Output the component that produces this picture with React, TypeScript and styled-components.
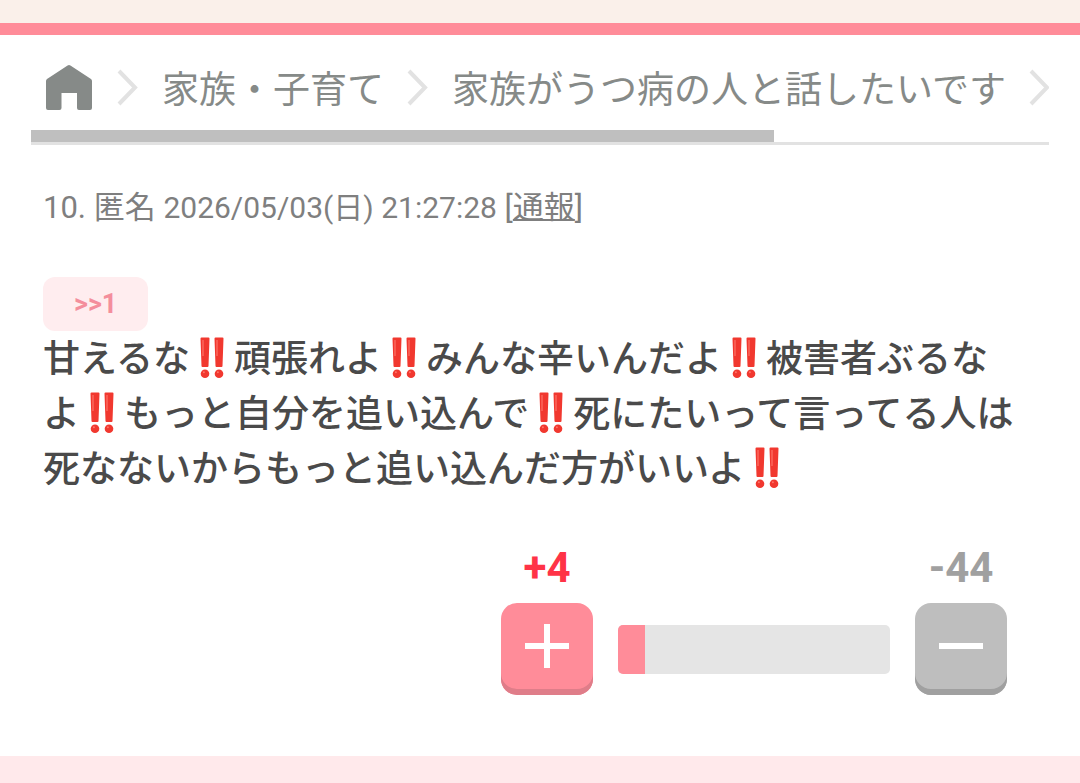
import React from "react";
import styled, { createGlobalStyle } from "styled-components";

const GlobalStyle = createGlobalStyle`
  * { box-sizing: border-box; }
  body {
    margin: 0;
    background: #fff;
    font-family: Roboto, "Noto Sans CJK JP", sans-serif;
  }
`;

const Page = styled.div`
  display: flex;
  flex-direction: column;
  min-height: 100vh;
`;

const TopStrip = styled.header`
  height: 35px;
  background: #faf0ea;
  border-bottom: 12px solid #ff8c99;
`;

const BreadcrumbNav = styled.nav`
  margin: 0 31px;
  border-bottom: 3px solid #e2e2e2;
`;

const CrumbList = styled.ol`
  display: flex;
  align-items: center;
  gap: 23px;
  height: 95px;
  margin: 0;
  padding: 10px 0 0 15px;
  list-style: none;
  overflow: hidden;
  white-space: nowrap;
`;

const Crumb = styled.li`
  display: flex;
  align-items: center;
  gap: 23px;
  flex-shrink: 0;
`;

const CrumbLink = styled.a`
  display: block;
  color: #868a88;
  font-family: "Noto Sans CJK JP", sans-serif;
  font-size: 37px;
  line-height: 55px;
  text-decoration: none;

  svg { display: block; }
`;

const ScrollThumb = styled.div`
  width: 73%;
  height: 12px;
  background: #bfbfbf;
`;

const Comment = styled.article`
  padding: 43px 43px 61px;
`;

const Meta = styled.p`
  margin: 0 0 49px;
  color: #7f7f7f;
  font-size: 31px;
  line-height: 40px;
`;

const PostTime = styled.time`
  font-size: 30px;
`;

const ReportLink = styled.a`
  color: inherit;
  text-decoration: underline;
  text-decoration-thickness: 2px;
`;

const ReplyLink = styled.a`
  display: block;
  width: fit-content;
  padding: 0 31px;
  border-radius: 12px;
  background: #ffedef;
  color: #f48e9c;
  font-size: 27px;
  font-weight: 700;
  line-height: 54px;
  text-decoration: none;
`;

const Body = styled.p`
  margin: 1px 0 0;
  padding-right: 15px;
  color: #4a4a4a;
  font-size: 37px;
  font-weight: 500;
  line-height: 55px;
`;

const EmojiMark = styled.svg`
  width: 44px;
  height: 42px;
  vertical-align: -7px;
`;

const VoteRow = styled.div`
  display: flex;
  justify-content: flex-end;
  align-items: flex-end;
  gap: 25px;
  margin-top: 47px;
  padding-right: 30px;
`;

const VoteColumn = styled.div`
  display: flex;
  flex-direction: column;
  align-items: center;
  gap: 11px;
  width: 92px;
`;

const VoteCount = styled.span<{ $color: string }>`
  color: ${(p) => p.$color};
  font-size: 42px;
  font-weight: 700;
  line-height: 48px;
`;

const VoteButton = styled.button<{ $face: string; $edge: string }>`
  display: flex;
  justify-content: center;
  width: 92px;
  height: 92px;
  padding: 21px 0 0;
  border: 0;
  border-radius: 16px;
  background: ${(p) => p.$face};
  box-shadow: inset 0 -6px 0 ${(p) => p.$edge};
  cursor: pointer;
`;

const VoteBar = styled.div`
  width: 272px;
  height: 49px;
  margin-bottom: 21px;
  border-radius: 5px;
  background: #e5e5e5;
  overflow: hidden;
`;

const VoteFill = styled.div`
  width: 10%;
  height: 100%;
  background: #ff8c99;
`;

const BottomStrip = styled.footer`
  flex: 1;
  min-height: 27px;
  background: #ffe9eb;
`;

const HomeIcon = () => (
  <svg width="48" height="45" viewBox="0 0 48 45" aria-hidden="true">
    <path
      fill="#868a88"
      d="M21.6 .5Q23-.4 24.4 .5L45 14Q46 14.8 46 16V43Q46 45 44 45H33Q31 45 31 43V28H15.500V43Q15.500 45 13.500 45H2Q0 45 0 43V16Q0 14.800 1 14Z"
    />
  </svg>
);

const Chevron = () => (
  <svg width="22" height="37" viewBox="0 0 22 37" aria-hidden="true">
    <path d="M2 2L18 18.500L2 35" fill="none" stroke="#e2e2e2" strokeWidth="4" />
  </svg>
);

const DoubleBang = () => (
  <EmojiMark viewBox="0 0 44 42" role="img" aria-label="‼️">
    {[10.5, 24.500].map((x) => (
      <g key={x} fill="#f1382f">
        <path d={`M${x} 1.500Q${x} .5 ${x + 1} .5H${x + 8}Q${x + 9} .5 ${x + 9} 1.500L${x + 8} 29Q${x + 8} 30 ${x + 7} 30H${x + 2}Q${x + 1} 30 ${x + 1} 29Z`} />
        <path d={`M${x + 2.5} 3V19`} stroke="#ff7468" strokeWidth="1.200" />
        <circle cx={x + 4.5} cy="36.700" r="4.300" />
        <circle cx={x + 3.4} cy="35.300" r="1" fill="#ff7468" />
      </g>
    ))}
  </EmojiMark>
);

export default function App() {
  return (
    <Page>
      <GlobalStyle />
      <TopStrip />
      <main>
        <BreadcrumbNav aria-label="breadcrumb">
          <CrumbList>
            <Crumb>
              <CrumbLink href="#home" aria-label="ホーム">
                <HomeIcon />
              </CrumbLink>
              <Chevron />
            </Crumb>
            <Crumb>
              <CrumbLink href="#category">家族・子育て</CrumbLink>
              <Chevron />
            </Crumb>
            <Crumb>
              <CrumbLink href="#topic">家族がうつ病の人と話したいです</CrumbLink>
              <Chevron />
            </Crumb>
          </CrumbList>
          <ScrollThumb />
        </BreadcrumbNav>

        <Comment>
          <Meta>
            10. 匿名 <PostTime dateTime="2026-05-03T21:27:28">2026/05/03(日) 21:27:28</PostTime>{" "}
            [<ReportLink href="#report">通報</ReportLink>]
          </Meta>
          <ReplyLink href="#comment1">&gt;&gt;1</ReplyLink>
          <Body>
            甘えるな
            <DoubleBang />
            頑張れよ
            <DoubleBang />
            みんな辛いんだよ
            <DoubleBang />
            被害者ぶるなよ
            <DoubleBang />
            もっと自分を追い込んで
            <DoubleBang />
            死にたいって言ってる人は死なないからもっと追い込んだ方がいいよ
            <DoubleBang />
          </Body>
          <VoteRow>
            <VoteColumn>
              <VoteCount $color="#ff3347">+4</VoteCount>
              <VoteButton type="button" aria-label="プラス" $face="#ff8c99" $edge="#df7d89">
                <svg width="44" height="44" viewBox="0 0 44 44" aria-hidden="true">
                  <path d="M0 22H44M22 0V44" stroke="#fff" strokeWidth="6" />
                </svg>
              </VoteButton>
            </VoteColumn>
            <VoteBar>
              <VoteFill />
            </VoteBar>
            <VoteColumn>
              <VoteCount $color="#a0a0a0">-44</VoteCount>
              <VoteButton type="button" aria-label="マイナス" $face="#bebebe" $edge="#a0a0a0">
                <svg width="44" height="44" viewBox="0 0 44 44" aria-hidden="true">
                  <path d="M0 22H44" stroke="#fff" strokeWidth="6" />
                </svg>
              </VoteButton>
            </VoteColumn>
          </VoteRow>
        </Comment>
      </main>
      <BottomStrip />
    </Page>
  );
}
